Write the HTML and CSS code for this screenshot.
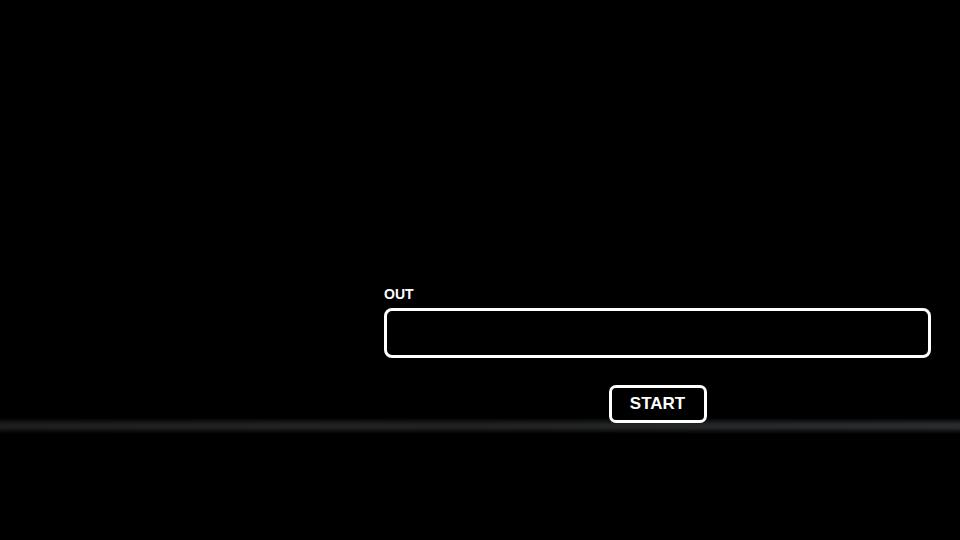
FILE: index.html
```html
<!DOCTYPE html>
<html>
<head>
<meta charset="utf-8">
<link rel="stylesheet" href="styles.css">
</head>
<body>
<main class="panel">
  <label class="field-label" for="out">OUT</label>
  <div class="output" id="out"></div>
  <div class="actions">
    <button class="start-btn">START</button>
  </div>
</main>
</body>
</html>
```

FILE: styles.css
```css
html, body {
  margin: 0;
  padding: 0;
  width: 960px;
  height: 540px;
  overflow: hidden;
}
body {
  background-color: #000;
  background-image:
    linear-gradient(to bottom, rgba(0,0,0,1) 0%, rgba(0,0,0,0.6) 18%, rgba(0,0,0,0.15) 40%, rgba(0,0,0,0.15) 60%, rgba(0,0,0,0.65) 82%, rgba(0,0,0,1) 100%),
    linear-gradient(to right, #222 0%, #272727 30%, #262626 50%, #2b2d2f 75%, #303335 100%);
  background-size: 960px 16px, 960px 16px;
  background-position: 0 418px, 0 418px;
  background-repeat: no-repeat;
  font-family: "Liberation Sans", Arial, sans-serif;
  color: #fff;
}
.panel {
  width: 547px;
  margin-left: 384px;
  padding-top: 286px;
  display: flex;
  flex-direction: column;
}
.field-label {
  font-size: 14px;
  line-height: 16px;
  font-weight: bold;
  margin-bottom: 6px;
}
.output {
  box-sizing: border-box;
  height: 50px;
  border: 3px solid #fff;
  border-radius: 8px;
  background: #000;
}
.actions {
  display: flex;
  justify-content: center;
  margin-top: 27px;
}
.start-btn {
  box-sizing: border-box;
  width: 98px;
  height: 38px;
  border: 3px solid #fff;
  border-radius: 7px;
  background: #000;
  color: #fff;
  font-family: "Liberation Sans", Arial, sans-serif;
  font-size: 17px;
  font-weight: bold;
  padding: 0;
}
```
